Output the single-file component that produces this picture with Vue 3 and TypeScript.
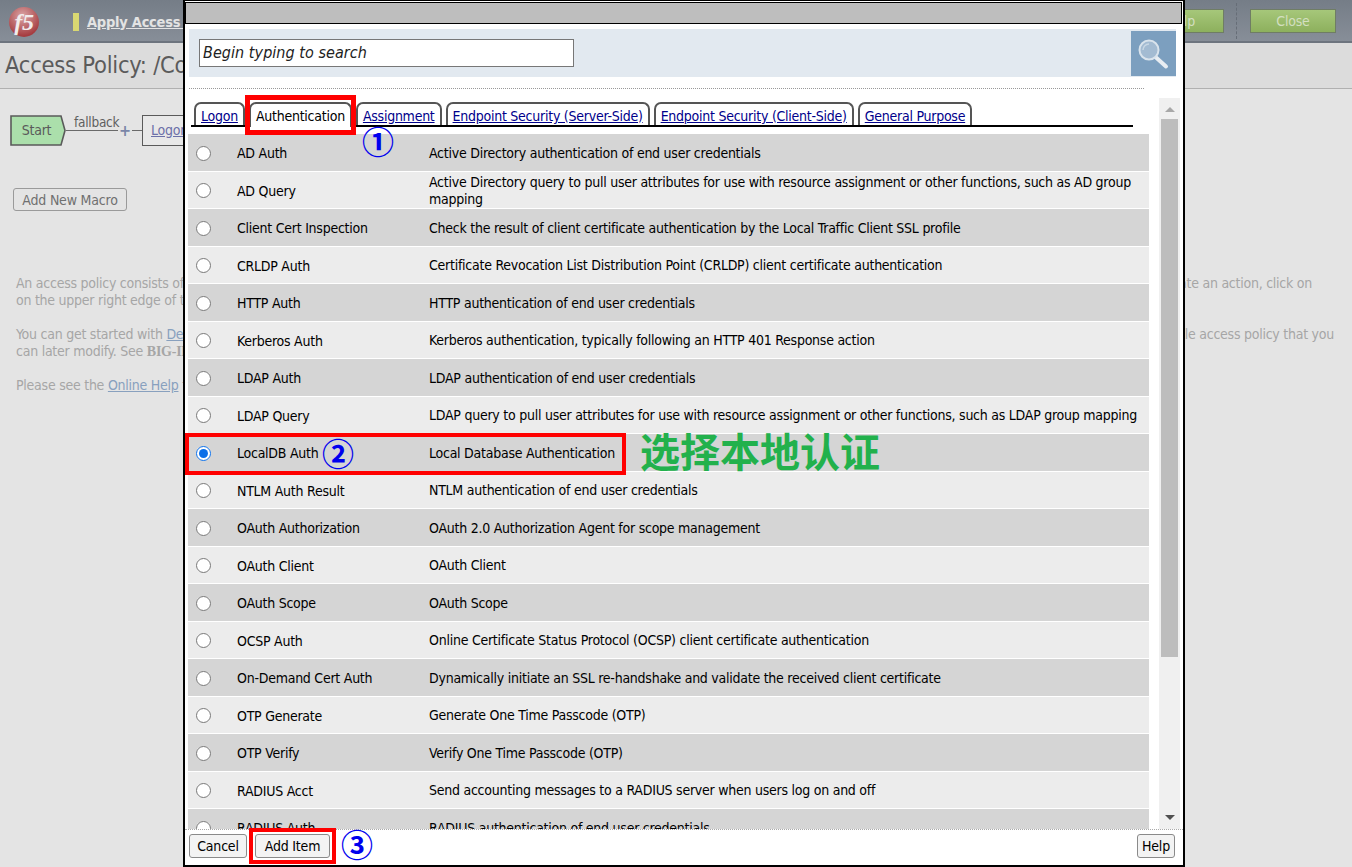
<script setup lang="ts">
interface Row { name: string; desc: string; selected?: boolean }
const tabs: { label: string; active?: boolean }[] = [
  { label: 'Logon' },
  { label: 'Authentication', active: true },
  { label: 'Assignment' },
  { label: 'Endpoint Security (Server-Side)' },
  { label: 'Endpoint Security (Client-Side)' },
  { label: 'General Purpose' },
]
const rows: Row[] = [
  { name: 'AD Auth', desc: 'Active Directory authentication of end user credentials' },
  { name: 'AD Query', desc: 'Active Directory query to pull user attributes for use with resource assignment or other functions, such as AD group mapping' },
  { name: 'Client Cert Inspection', desc: 'Check the result of client certificate authentication by the Local Traffic Client SSL profile' },
  { name: 'CRLDP Auth', desc: 'Certificate Revocation List Distribution Point (CRLDP) client certificate authentication' },
  { name: 'HTTP Auth', desc: 'HTTP authentication of end user credentials' },
  { name: 'Kerberos Auth', desc: 'Kerberos authentication, typically following an HTTP 401 Response action' },
  { name: 'LDAP Auth', desc: 'LDAP authentication of end user credentials' },
  { name: 'LDAP Query', desc: 'LDAP query to pull user attributes for use with resource assignment or other functions, such as LDAP group mapping' },
  { name: 'LocalDB Auth', desc: 'Local Database Authentication', selected: true },
  { name: 'NTLM Auth Result', desc: 'NTLM authentication of end user credentials' },
  { name: 'OAuth Authorization', desc: 'OAuth 2.0 Authorization Agent for scope management' },
  { name: 'OAuth Client', desc: 'OAuth Client' },
  { name: 'OAuth Scope', desc: 'OAuth Scope' },
  { name: 'OCSP Auth', desc: 'Online Certificate Status Protocol (OCSP) client certificate authentication' },
  { name: 'On-Demand Cert Auth', desc: 'Dynamically initiate an SSL re-handshake and validate the received client certificate' },
  { name: 'OTP Generate', desc: 'Generate One Time Passcode (OTP)' },
  { name: 'OTP Verify', desc: 'Verify One Time Passcode (OTP)' },
  { name: 'RADIUS Acct', desc: 'Send accounting messages to a RADIUS server when users log on and off' },
  { name: 'RADIUS Auth', desc: 'RADIUS authentication of end user credentials' },
]
</script>

<template>
  <div class="root">
    <div class="page">
      <header class="topbar">
        <div class="logo"><span>f5</span></div>
        <div class="flag"></div>
        <a class="apply">Apply Access Policy</a>
        <div class="top-actions">
          <button class="green">Help</button>
          <div class="divider"></div>
          <button class="green">Close</button>
        </div>
      </header>
      <div class="title">Access Policy: /Common/LocalDB_Policy</div>
      <div class="content">
        <div class="diagram">
          <div class="start">
            <svg width="56" height="31" viewBox="0 0 56 31">
              <path d="M1 1H51L55 15.5L51 30H1Z" fill="#abdfab" stroke="#5a5a5a" stroke-width="1.6" />
            </svg>
            <span>Start</span>
          </div>
          <div class="branch">
            <span class="fallback">fallback</span>
            <div class="wire"><i class="w1"></i><b>+</b><i class="w2"></i></div>
          </div>
          <div class="logon"><a>Logon Page</a></div>
        </div>
        <button class="macro">Add New Macro</button>
        <div class="help">
          <div class="para first">
            <div class="line"><span>An access policy consists of branches and actions.</span><span>To create an action, click on</span></div>
            <div class="line"><span>on the upper right edge of the action.</span></div>
          </div>
          <div class="para second">
            <div class="line"><span>You can get started with <a>Device Wizards</a></span><span>a sample access policy that you</span></div>
            <div class="line"><span>can later modify. See <b>BIG-IP</b></span></div>
          </div>
          <div class="para">
            <div class="line"><span>Please see the <a>Online Help</a> for details.</span></div>
          </div>
        </div>
      </div>
    </div>

    <section class="dialog">
      <div class="titlebar"></div>
      <div class="search">
        <input class="search-input" placeholder="Begin typing to search" />
        <div class="search-btn">
          <svg width="45" height="45" viewBox="0 0 45 45">
            <line x1="24.5" y1="26" x2="35" y2="35.5" stroke="#e8edf2" stroke-width="4" stroke-linecap="round" />
            <circle cx="18" cy="19" r="9.5" fill="#a3bbd2" stroke="#d9e3ec" stroke-width="2" />
            <path d="M12 19a6 6 0 0 1 6-6" fill="none" stroke="#c8d7e4" stroke-width="1.5" />
          </svg>
        </div>
      </div>
      <div class="dots"></div>
      <div class="body">
        <div class="main">
          <nav class="tabs">
            <a v-for="t in tabs" :key="t.label" class="tab" :class="{ active: t.active }">{{ t.label }}</a>
          </nav>
          <div class="list">
            <label v-for="r in rows" :key="r.name" class="row">
              <input type="radio" name="item" class="radio" :checked="r.selected" />
              <span class="name">{{ r.name }}</span>
              <span class="desc">{{ r.desc }}</span>
            </label>
          </div>
        </div>
        <div class="scrollbar">
          <div class="arrow up"></div>
          <div class="thumb"></div>
          <div class="arrow down"></div>
        </div>
      </div>
      <footer class="footer">
        <button class="btn">Cancel</button>
        <button class="btn add">Add Item</button>
        <button class="btn helpbtn">Help</button>
      </footer>
    </section>

    <div class="redbox box1"></div>
    <div class="redbox box2"></div>
    <div class="redbox box3"></div>
    <span class="num n1">①</span>
    <span class="num n2">②</span>
    <span class="num n3">③</span>
    <span class="note">选择本地认证</span>
  </div>
</template>

<style>
html, body { margin: 0; padding: 0; }
</style>

<style scoped>
.root {
  position: relative;
  width: 1352px;
  height: 867px;
  overflow: hidden;
  background: #e4e4e4;
  font-family: "DejaVu Sans Condensed", "DejaVu Sans", sans-serif;
  font-size: 14px;
  letter-spacing: -0.25px;
  color: #000;
}
.page { width: 1352px; height: 867px; display: flex; flex-direction: column; color: #a3a3a3; }
.topbar {
  height: 41px;
  display: flex;
  align-items: center;
  background: linear-gradient(#757d87, #878e98);
  border-bottom: 2px solid #6d747e;
  flex: none;
}
.logo {
  width: 30px;
  height: 30px;
  margin: 2px 0 0 9px;
  border-radius: 50%;
  background: radial-gradient(circle at 45% 30%, #dba6a6, #a53c40 75%);
  display: flex;
  align-items: center;
  justify-content: center;
}
.logo span { font: italic bold 24px "Liberation Serif", serif; color: #f1ecec; line-height: 30px; }
.flag { width: 6px; height: 18px; margin: 2px 0 0 34px; background: #d9d872; }
.apply { margin: 2px 0 0 8px; font-weight: 700; font-size: 14.5px; color: #e3e3e3; text-decoration: underline; white-space: nowrap; }
.top-actions { margin-left: auto; margin-right: 16px; display: flex; align-items: center; }
.green {
  width: 86px;
  height: 24px;
  padding: 0;
  border: 1px solid #6f7d64;
  background: linear-gradient(#a6c77a, #8db05d);
  color: #d3dfc0;
  font: 14px "DejaVu Sans Condensed", "DejaVu Sans", sans-serif;
  letter-spacing: -0.2px;
}
.divider { width: 0; height: 36px; margin: 0 13px 0 12px; border-left: 1px dashed #666d77; }
.title {
  height: 46px;
  flex: none;
  box-sizing: border-box;
  padding-left: 5px;
  background: #dcdcdc;
  border-bottom: 1px solid #b0b0b0;
  font-size: 23.5px;
  line-height: 45px;
  color: #5b5b5b;
  white-space: nowrap;
}
.content { flex: 1; padding: 26px 0 0 10px; }
.diagram { display: flex; align-items: flex-start; height: 31px; }
.start { position: relative; width: 56px; height: 31px; }
.start svg { display: block; }
.start span { position: absolute; left: 0; right: 3px; top: 7px; text-align: center; color: #5a5a5a; }
.branch { width: 76px; position: relative; height: 31px; }
.fallback { position: absolute; left: 8px; top: -1px; font-size: 13.5px; color: #5f5f5f; }
.wire { position: absolute; left: 0; right: 0; top: 15px; display: flex; align-items: center; }
.wire i { display: block; height: 1px; background: #6a6a6a; }
.w1 { width: 52px; }
.w2 { width: 10px; }
.wire b { width: 14px; text-align: center; color: #7a86a8; font-size: 16px; line-height: 1px; font-weight: 700; }
.logon { width: 80px; border: 1px solid #5a5a5a; background: #e8e8e8; padding: 6px 0 0 8px; box-sizing: border-box; height: 31px; }
.logon a { color: #6c70a8; text-decoration: underline; white-space: nowrap; }
.macro {
  display: block;
  margin: 42px 0 0 3px;
  width: 114px;
  height: 23px;
  padding: 0;
  border: 1px solid #9a9a9a;
  border-radius: 3px;
  background: #e4e4e4;
  color: #707070;
  font: 14px "DejaVu Sans Condensed", "DejaVu Sans", sans-serif;
  letter-spacing: -0.2px;
}
.help { margin: 64px 0 0 6px; line-height: 17px; font-size: 14px; color: #a6a6a6; }
.para { margin-bottom: 17px; width: 1318px; }
.para.first { width: 1296px; }
.line { display: flex; justify-content: space-between; white-space: nowrap; height: 17px; }
.line a { color: #88a0be; text-decoration: underline; }
.line b { font-family: "Liberation Serif", serif; }

.dialog {
  position: absolute;
  left: 183px;
  top: 0;
  width: 1002px;
  height: 867px;
  box-sizing: border-box;
  border: 2px solid #000;
  border-top-width: 1px;
  background: #fff;
  display: flex;
  flex-direction: column;
}
.titlebar {
  height: 22px;
  flex: none;
  box-sizing: border-box;
  margin: 1px 1px 0 0;
  border: 1px solid #000;
  background: #bebebe;
}
.search {
  flex: none;
  height: 48px;
  margin: 5px 6px 0 4px;
  width: 987px;
  box-sizing: border-box;
  padding: 2px 0 2px 10px;
  background: #e2e9f0;
  display: flex;
  align-items: center;
  justify-content: space-between;
}
.search-input {
  width: 375px;
  height: 28px;
  box-sizing: border-box;
  border: 1px solid #777;
  background: #fff;
  padding: 0 3px 2px;
  font: italic 16px "DejaVu Sans Condensed", "DejaVu Sans", sans-serif;
  letter-spacing: 0.05px;
  outline: none;
}
.search-input::placeholder { color: #222; opacity: 1; }
.search-btn { width: 45px; height: 45px; background: #7c9fbf; }
.search-btn svg { display: block; }
.dots { flex: none; width: 955px; height: 0; margin: 11px 0 0 4px; border-top: 1px dotted #999; }
.body { flex: none; height: 731px; margin-top: 9px; display: flex; overflow: hidden; }
.main { width: 974px; flex: none; }
.tabs {
  margin: 4px 0 0 6px;
  width: 939px;
  height: 23px;
  padding-left: 3px;
  display: flex;
  gap: 4px;
  border-bottom: 2px solid #000;
}
.tab {
  height: 23px;
  box-sizing: border-box;
  padding: 4px 5px 0;
  border: 2px solid #555;
  border-bottom: none;
  border-radius: 7px 7px 0 0;
  background: #fff;
  color: #00008b;
  text-decoration: underline;
  white-space: nowrap;
  line-height: 17px;
}
.tab.active {
  height: 25px;
  color: #000;
  text-decoration: none;
  position: relative;
}
.list { margin: 7px 0 0 3px; width: 961px; }
.row {
  height: 37.5px;
  box-sizing: border-box;
  padding-top: 2px;
  display: flex;
  align-items: center;
  border-bottom: 1.5px solid #fff;
  background: #d5d5d5;
}
.row:nth-child(even) { background: #ececec; }
.radio { width: 15px; height: 15px; margin: 0 0 0 8px; flex: none; accent-color: #0b6fe8; }
.name { width: 192px; margin-left: 26px; flex: none; }
.desc { flex: 1; padding-right: 8px; line-height: 17px; }
.scrollbar {
  width: 21px;
  height: 731px;
  flex: none;
  background: #f0f0f0;
  display: flex;
  flex-direction: column;
  align-items: center;
}
.thumb { width: 17px; height: 538px; background: #bdbdbd; margin-bottom: auto; }
.arrow { width: 0; height: 0; border-left: 5px solid transparent; border-right: 5px solid transparent; }
.arrow.up { margin: 9px 0 7px; border-bottom: 5px solid #a8a8a8; }
.arrow.down { margin: 0 0 9px; border-top: 5px solid #505050; }
.footer {
  flex: 1;
  box-sizing: border-box;
  border-top: 1px dotted #aaa;
  display: flex;
  align-items: flex-start;
  padding: 4px 8px 0 4px;
}
.btn {
  height: 24px;
  padding: 0;
  border: 1px solid #8a8a8a;
  border-radius: 3px;
  background: #f3f3f3;
  color: #000;
  font: 14px "DejaVu Sans Condensed", "DejaVu Sans", sans-serif;
  letter-spacing: -0.2px;
  width: 58px;
}
.add { width: 75px; margin-left: 8px; }
.helpbtn { width: 38px; margin-left: auto; }

.redbox { position: absolute; box-sizing: border-box; border: 4px solid #ff0000; pointer-events: none; }
.box1 { left: 245px; top: 95px; width: 111px; height: 40px; border-width: 5px; }
.box2 { left: 185px; top: 433px; width: 441px; height: 42px; }
.box3 { left: 249px; top: 828px; width: 87px; height: 36px; }
.num {
  position: absolute;
  font-family: "Noto Sans CJK SC", sans-serif;
  font-weight: 700;
  font-size: 32px;
  line-height: 32px;
  width: 32px;
  text-align: center;
  color: #0000ee;
  letter-spacing: 0;
}
.n1 { left: 362px; top: 124px; }
.n2 { left: 322px; top: 436px; }
.n3 { left: 341px; top: 827px; }
.note {
  position: absolute;
  left: 640px;
  top: 426px;
  font-family: "Noto Sans CJK SC", sans-serif;
  font-weight: 700;
  font-size: 40px;
  line-height: 48px;
  letter-spacing: 0;
  color: #22b14c;
  white-space: nowrap;
}
</style>
